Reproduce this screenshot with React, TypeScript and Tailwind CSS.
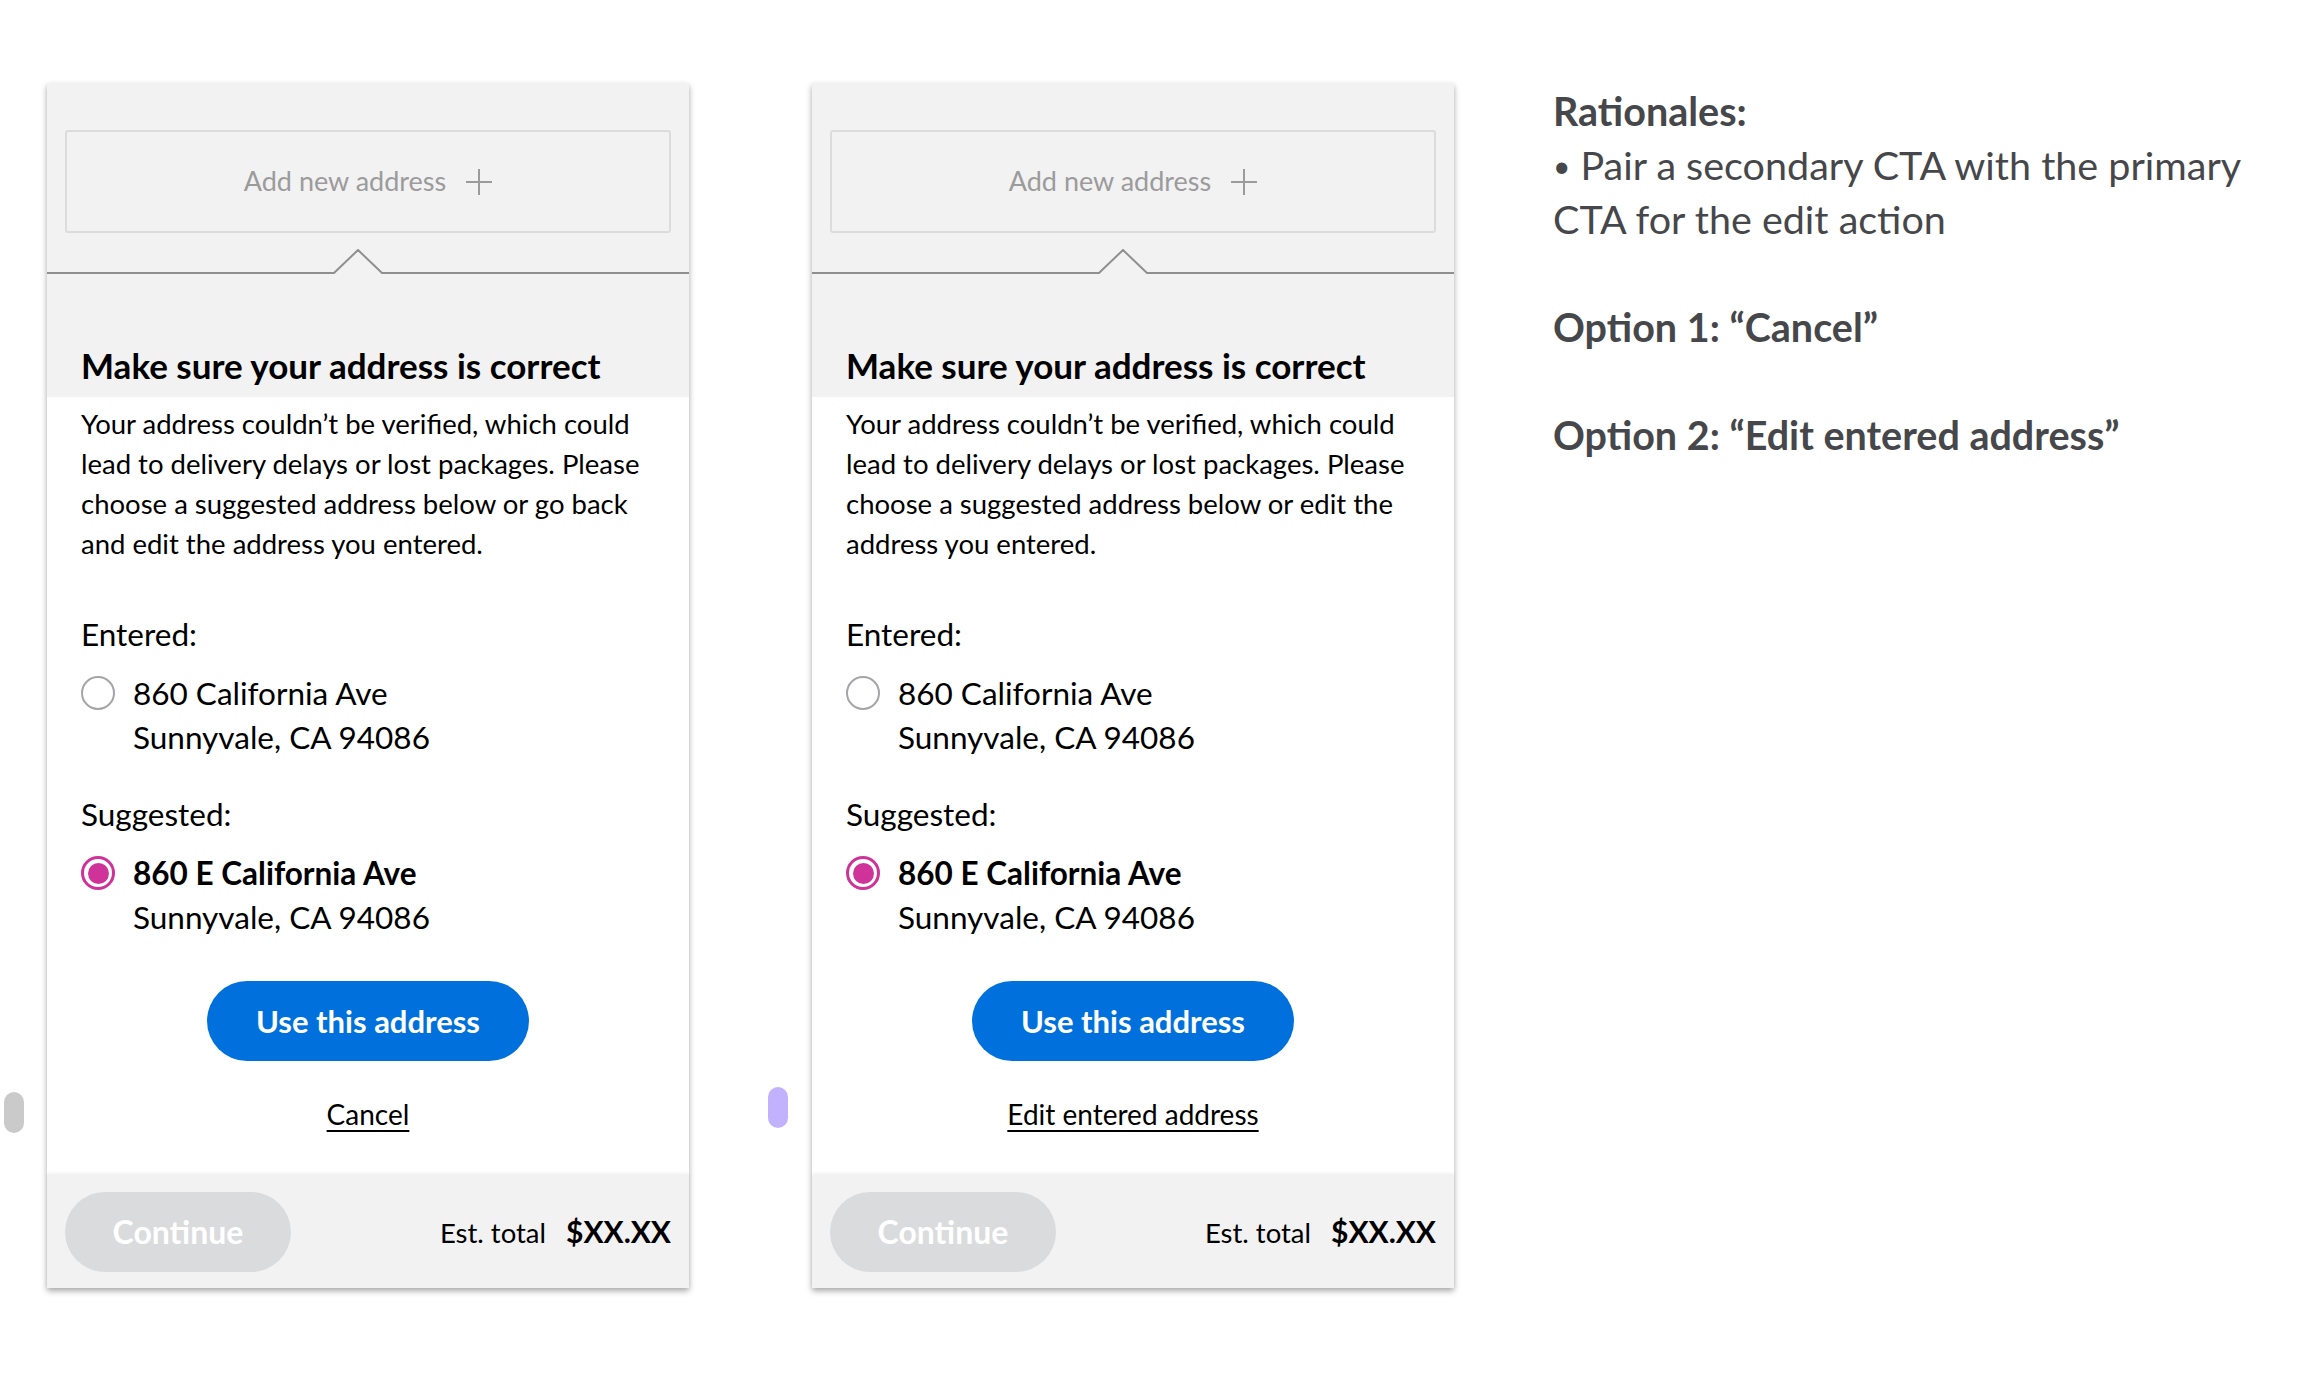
import { ReactNode } from "react"

const Radio = ({ checked }: { checked?: boolean }) =>
    checked ? (
        <span className="shrink-0 w-[34px] h-[34px] rounded-full border-[3.5px] border-[#cf3399] p-[3.5px] flex">
            <span className="flex-1 rounded-full bg-[#cf3399]" />
        </span>
    ) : (
        <span className="shrink-0 w-[34px] h-[34px] rounded-full border-2 border-[#a4a4a9]" />
    )

const Address = ({ street, checked }: { street: string, checked?: boolean }) => (
    <div className="flex items-start gap-[18px] text-[31.5px] leading-[44px] text-black">
        <span className="h-[44px] flex items-center">
            <Radio checked={checked} />
        </span>
        <div>
            <p className={checked ? "font-bold" : ""}>{street}</p>
            <p>Sunnyvale, CA 94086</p>
        </div>
    </div>
)

interface CardProps {
    body: string[]
    link: string
}

const Card = ({ body, link }: CardProps) => (
    <div className="w-[642px] h-[1205px] shrink-0 flex flex-col bg-white shadow-[0_3px_6px_rgba(0,0,0,0.35)]">
        {/* top grey part */}
        <div className="bg-[#f2f2f2] pt-[47px] pb-[13px]">
            <div className="mx-[18px] h-[103px] rounded-[3px] border-2 border-[#dcdcdc] flex items-center justify-center gap-[20px] text-[27px] text-[#9b9b9b]">
                <span>Add new address</span>
                <svg width="26" height="26" viewBox="0 0 26 26">
                    <path d="M13 0 V26 M0 13 H26" stroke="#9b9b9b" strokeWidth="2" />
                </svg>
            </div>
            <svg className="block mt-[16px] w-full h-[26px]" viewBox="0 0 642 26">
                <path d="M0 24 H287 L311 1 L335 24 H642" fill="none" stroke="#8f8f8f" strokeWidth="2" />
            </svg>
            <h2 className="mt-[71px] px-[34px] text-[35px] leading-[38px] font-bold text-black">
                Make sure your address is correct
            </h2>
        </div>

        {/* white body */}
        <div className="px-[34px] pt-[7px]">
            <p className="text-[27.5px] leading-[40px] text-black">
                {body.map((line, i) => <span key={i} className="block">{line}</span>)}
            </p>
            <p className="mt-[48px] text-[31.5px] leading-[44px] text-black">Entered:</p>
            <div className="mt-[15px]">
                <Address street="860 California Ave" />
            </div>
            <p className="mt-[33px] text-[31.5px] leading-[44px] text-black">Suggested:</p>
            <div className="mt-[15px]">
                <Address street="860 E California Ave" checked />
            </div>
        </div>
        <div className="flex flex-col items-center">
            <button className="mt-[42px] w-[322px] h-[80px] rounded-full bg-[#0071dc] text-white text-[31px] font-bold">
                Use this address
            </button>
            <a className="mt-[35px] text-[28px] leading-[36px] text-black underline underline-offset-[5px] decoration-2">
                {link}
            </a>
        </div>

        {/* footer */}
        <div className="mt-auto h-[113px] bg-[#f2f2f2] shadow-[0_-2px_3px_rgba(0,0,0,0.06)] px-[18px] flex items-center justify-between">
            <button className="w-[226px] h-[80px] rounded-full bg-[#dadbdd] text-white text-[32px] font-bold">
                Continue
            </button>
            <div className="flex items-baseline gap-[20px] text-black">
                <span className="text-[27.5px]">Est. total</span>
                <span className="text-[30px] font-bold">$XX.XX</span>
            </div>
        </div>
    </div>
)

const Handle = ({ className }: { className: string }): ReactNode => (
    <span className={`shrink-0 w-[20px] h-[41px] rounded-full ${className}`} />
)

export default function App() {
    return (
        <div className="w-[2314px] h-[1392px] bg-white flex items-start [font-family:Lato,sans-serif]">
            <Handle className="ml-[4px] mt-[1092px] bg-[#cacaca]" />
            <div className="ml-[23px] mt-[83px]">
                <Card
                    link="Cancel"
                    body={[
                        "Your address couldn’t be verified, which could",
                        "lead to delivery delays or lost packages. Please",
                        "choose a suggested address below or go back",
                        "and edit the address you entered.",
                    ]} />
            </div>
            <Handle className="ml-[79px] mt-[1087px] bg-[#c2b2fd]" />
            <div className="ml-[24px] mt-[83px]">
                <Card
                    link="Edit entered address"
                    body={[
                        "Your address couldn’t be verified, which could",
                        "lead to delivery delays or lost packages. Please",
                        "choose a suggested address below or edit the",
                        "address you entered.",
                    ]} />
            </div>

            {/* notes */}
            <div className="ml-[99px] mt-[84px] text-[39.5px] leading-[54px] text-[#46474a]">
                <p className="font-bold">Rationales:</p>
                <p><span className="text-[30px] align-[3px]">•</span> Pair a secondary CTA with the primary</p>
                <p>CTA for the edit action</p>
                <p className="mt-[54px] font-bold">Option 1: “Cancel”</p>
                <p className="mt-[54px] font-bold">Option 2: “Edit entered address”</p>
            </div>
        </div>
    )
}
